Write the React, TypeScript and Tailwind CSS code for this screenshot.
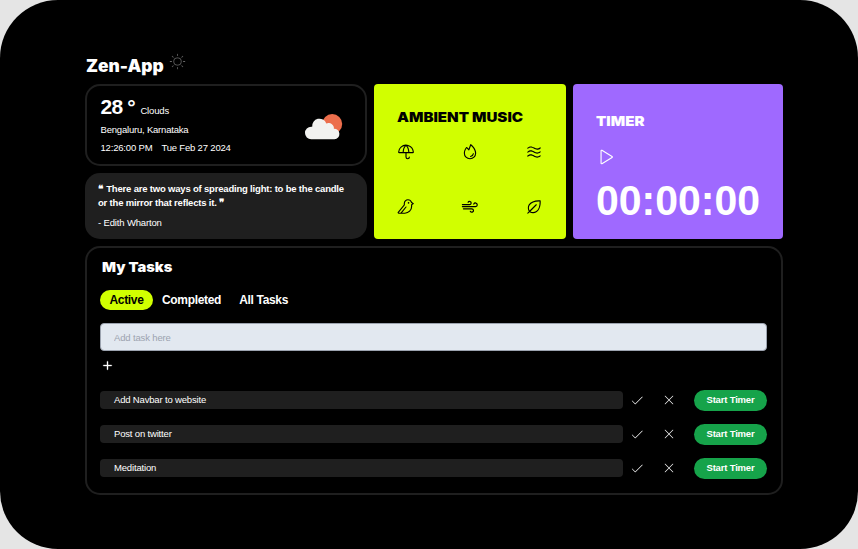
import {
  PiBird,
  PiCheckLight,
  PiFire,
  PiLeaf,
  PiPlay,
  PiPlusBold,
  PiSunLight,
  PiUmbrella,
  PiWaves,
  PiXLight,
} from "react-icons/pi";

const heading = "block w-fit origin-left font-['Inter','Liberation_Sans',sans-serif] font-black whitespace-nowrap";

function Wind({ className }: { className?: string }) {
  return (
    <svg
      className={className}
      viewBox="0 0 18 18"
      fill="none"
      stroke="currentColor"
      strokeWidth="1.2"
      strokeLinecap="round"
    >
      <path d="M1.4 6.6h7.2a1.6 1.6 0 1 0-1.5-2.3" />
      <path d="M1.4 8.6h13.2a1.8 1.8 0 1 0-1.8-2.5" />
      <path d="M2.4 10.8h8.4a1.7 1.7 0 1 1-1.5 2.5" />
    </svg>
  );
}

const sounds = [PiUmbrella, PiFire, PiWaves, PiBird, Wind, PiLeaf];
const tasks = ["Add Navbar to website", "Post on twitter", "Meditation"];

function WeatherIcon() {
  return (
    <svg className="mt-[27.5px] h-[26px] w-[38px]" viewBox="0 0 38 26">
      <circle cx="27.2" cy="10" r="10" fill="#ec6e4c" />
      <path
        fill="#f2f2f0"
        d="M6.2 25.2a6.2 6.2 0 0 1 0-12.4l1-.1a7.3 7.3 0 0 1 14.1-3.3A5.4 5.4 0 0 1 28.9 14.8a5.2 5.2 0 0 1 .6 10.4Z"
      />
    </svg>
  );
}

function Weather() {
  return (
    <section className="flex h-[82px] justify-between rounded-[15px] border-2 border-[#1f1f1f] pr-[22.5px] pl-[14px]">
      <div>
        <div className="flex h-[34px] items-baseline pt-[5px]">
          <span className="text-[21px] leading-[31px] font-bold tracking-[-0.8px]">28&nbsp;°</span>
          <span className="ml-[5.5px] text-[9.5px] tracking-[-0.15px]">Clouds</span>
        </div>
        <p className="mt-[3px] h-[13px] text-[9.5px] leading-[13px] tracking-[-0.2px]">Bengaluru, Karnataka</p>
        <p className="mt-[5px] flex gap-[9px] text-[9.5px] leading-[13px] tracking-[-0.18px]">
          <span>12:26:00 PM</span>
          <span>Tue Feb 27 2024</span>
        </p>
      </div>
      <WeatherIcon />
    </section>
  );
}

function Quote() {
  return (
    <section className="h-[66px] rounded-[15px] bg-[#1f1f1f] pt-[9px] pl-[13.5px] whitespace-nowrap">
      <p className="text-[9.5px] leading-[13.7px] font-bold tracking-[-0.19px]">
        <span className="mr-[1px]">❝</span> There are two ways of spreading light: to be the candle
        <br />
        or the mirror that reflects it. ❞
      </p>
      <p className="mt-[7px] text-[9.5px] leading-[13.7px] tracking-[-0.15px]">- Edith Wharton</p>
    </section>
  );
}

export default function App() {
  return (
    <div className="h-[549px] w-[858px] overflow-hidden bg-[#e5e5e5] font-['Liberation_Sans',Arial,sans-serif] text-white">
      <main className="h-[549px] w-[857.5px] rounded-[58px] bg-black pt-[52px] pl-[84.5px]">
        <header className="flex h-[32px] items-start">
          <h1 className={`${heading} ml-[1.5px] scale-x-[1.02] pt-[2px] text-[17px] leading-[24px]`}>Zen-App</h1>
          <PiSunLight className="mt-[1px] ml-[6.5px] size-[17px] text-[#666]" />
        </header>

        <div className="flex h-[155px] gap-[7px]">
          <div className="flex w-[282.5px] flex-col gap-[7px]">
            <Weather />
            <Quote />
          </div>

          <section className="w-[191.5px] rounded-[4px] bg-[#d1ff00] px-[23px] pt-[22.5px] text-black">
            <h2 className={`${heading} scale-x-[1.117] text-[13.5px] leading-[20px]`}>AMBIENT MUSIC</h2>
            <div className="mt-[16.5px] grid grid-cols-3 gap-y-[37px]">
              {sounds.map((Icon, i) => (
                <button
                  key={i}
                  className={
                    i % 3 === 0 ? "justify-self-start" : i % 3 === 1 ? "justify-self-center" : "justify-self-end"
                  }
                >
                  <Icon className="size-[18px]" />
                </button>
              ))}
            </div>
          </section>

          <section className="w-[210px] rounded-[4px] bg-[#9f69ff] pt-[27px] pl-[23px]">
            <h2 className={`${heading} scale-x-[1.117] text-[13.5px] leading-[20px]`}>TIMER</h2>
            <PiPlay className="mt-[17px] size-[18px]" />
            <p className="mt-[11px] w-fit origin-left scale-x-[0.953] text-[43px] leading-[47px] font-bold">00:00:00</p>
          </section>
        </div>

        <section className="mt-[7px] h-[248.5px] w-[698px] rounded-[15px] border-2 border-[#1f1f1f] pt-[9px] pr-[13.5px] pl-[13.5px]">
          <h2 className={`${heading} ml-[2px] scale-x-[1.085] text-[13.5px] leading-[20px]`}>My Tasks</h2>
          <nav className="mt-[12.5px] flex h-[20.5px] text-[12px] leading-[20px] font-bold tracking-[-0.32px]">
            <button className="w-[53px] rounded-full bg-[#d1ff00] text-black">Active</button>
            <button className="ml-[9px]">Completed</button>
            <button className="ml-[18px]">All Tasks</button>
          </nav>
          <input
            className="mt-[13px] block h-[28px] w-full rounded-[4px] border border-[#9ca3af] bg-[#e2e8f0] px-[13px] text-[9.5px] tracking-[-0.15px] placeholder:text-[#9ca3af]"
            placeholder="Add task here"
          />
          <PiPlusBold className="mt-[8.5px] ml-[2px] size-[11px]" stroke="currentColor" strokeWidth="8" />
          <ul className="mt-[19px] flex flex-col gap-[13px]">
            {tasks.map((task) => (
              <li key={task} className="flex h-[21px] items-center">
                <span className="h-[18px] w-[523px] rounded-[4px] bg-[#1f1f1f] pl-[14px] text-[9.5px] leading-[18px] tracking-[-0.17px]">
                  {task}
                </span>
                <PiCheckLight className="ml-[7px] size-[14px]" />
                <PiXLight className="ml-[18px] size-[14px]" />
                <button className="ml-auto h-[21px] w-[73px] rounded-full bg-[#16a34a] text-[9.5px] leading-[20px] font-bold tracking-[-0.18px]">
                  Start Timer
                </button>
              </li>
            ))}
          </ul>
        </section>
      </main>
    </div>
  );
}
